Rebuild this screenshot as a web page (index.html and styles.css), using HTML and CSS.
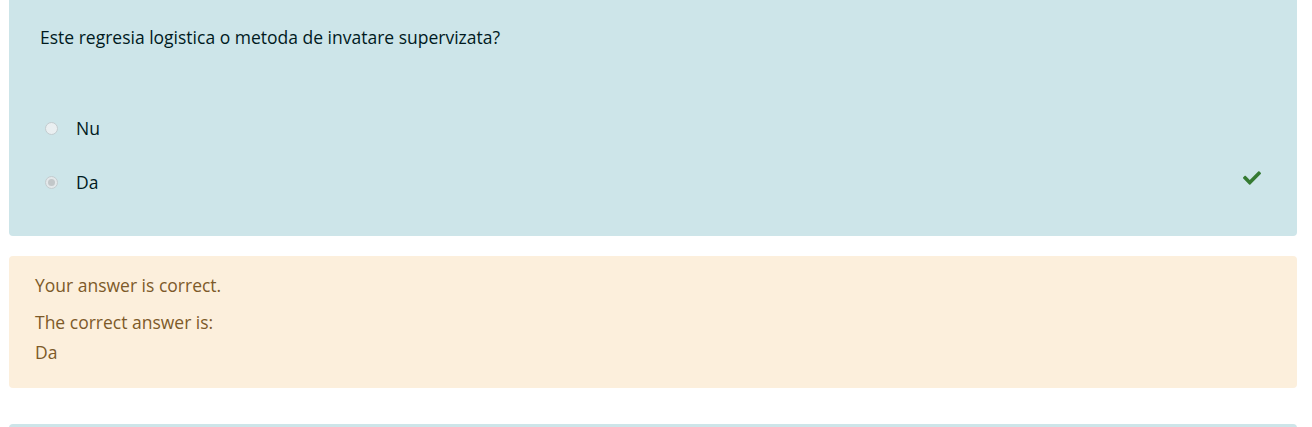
FILE: index.html
```html
<!DOCTYPE html>
<html>
<head>
<meta charset="utf-8">
<link rel="stylesheet" href="styles.css">
</head>
<body>
<div class="page">
  <div class="formulation">
    <div class="qtext">Este regresia logistica o metoda de invatare supervizata?</div>
    <div class="answers">
      <div class="answer">
        <span class="radio"></span>
        <span class="label">Nu</span>
      </div>
      <div class="answer">
        <span class="radio checked"></span>
        <span class="label">Da</span>
        <svg class="check" viewBox="0 0 512 512" width="18" height="18"><path fill="#357a32" d="M173.9 439.4l-166.4-166.4c-10-10-10-26.2 0-36.2l36.2-36.2c10-10 26.2-10 36.2 0L192 312.7 432.1 72.6c10-10 26.2-10 36.2 0l36.2 36.2c10 10 10 26.2 0 36.2l-294.4 294.4c-10 10-26.2 10-36.2 0z"/></svg>
      </div>
    </div>
  </div>
  <div class="outcome">
    <div class="feedback">Your answer is correct.</div>
    <div class="rightanswer">The correct answer is:<br>Da</div>
  </div>
  <div class="formulation next"></div>
</div>
</body>
</html>
```
FILE: styles.css
```css
html, body {
  margin: 0;
  padding: 0;
  background: #fff;
}
body {
  font-family: "Open Sans", "Noto Sans", sans-serif;
  font-size: 17.5px;
}
.page {
  padding: 0 15px 0 9px;
}
.formulation {
  background: #cde5e9;
  color: #001a1e;
  border-radius: 0 0 4px 4px;
  padding: 24px 31px 20px 31px;
  height: 236px;
  box-sizing: border-box;
}
.qtext {
  line-height: 26px;
}
.answers {
  margin-top: 65px;
}
.answer {
  display: flex;
  align-items: center;
  height: 26px;
  margin-bottom: 28px;
  padding-left: 5px;
}
.radio {
  width: 11px;
  height: 11px;
  border: 1.5px solid #c3cccf;
  border-radius: 50%;
  background: #eaeff1;
  display: flex;
  align-items: center;
  justify-content: center;
}
.radio.checked {
  background: #e3e8ea;
}
.radio.checked::after {
  content: "";
  width: 7px;
  height: 7px;
  border-radius: 50%;
  background: #c2c7c9;
}
.label {
  margin-left: 18px;
}
.check {
  margin-left: auto;
  margin-right: 5px;
  margin-top: -8px;
}
.outcome {
  margin-top: 20px;
  background: #fcefdc;
  color: #7d5a29;
  border-radius: 4px;
  padding: 16px 26px 22px 26px;
  height: 132px;
  box-sizing: border-box;
}
.feedback {
  line-height: 26px;
  margin-bottom: 9px;
}
.rightanswer {
  line-height: 30px;
}
.formulation.next {
  margin-top: 36px;
  height: 20px;
  border-radius: 4px 4px 0 0;
  padding: 0;
}
```
